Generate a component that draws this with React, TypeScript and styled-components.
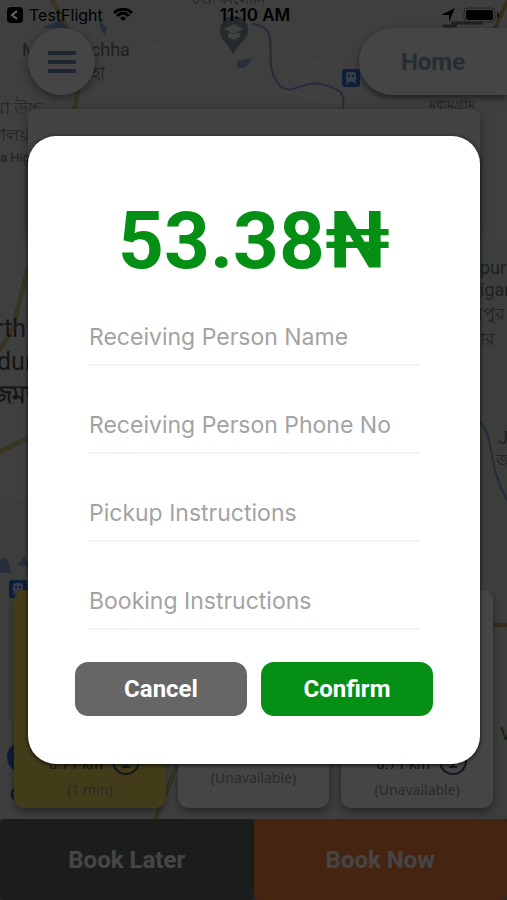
import React from "react";
import styled, { createGlobalStyle } from "styled-components";

const GlobalStyle = createGlobalStyle`
  *, *::before, *::after { box-sizing: border-box; }
  body { margin: 0; font-family: Roboto, "Noto Sans", sans-serif; background: #e3e5e3; }
  button, input { font: inherit; }
`;

const Screen = styled.div`
  position: relative;
  min-height: 100vh;
  display: flex;
  flex-direction: column;
  overflow: hidden;
`;

const MapCanvas = styled.svg`
  position: absolute;
  inset: 0;
  width: 100%;
  height: 100%;
`;

const Page = styled.main`
  position: relative;
  flex: 1;
  display: flex;
  flex-direction: column;
  padding-top: 28px;
`;

const TopBar = styled.header`
  display: flex;
  justify-content: space-between;
  padding-left: 28px;
`;

const MenuButton = styled.button`
  width: 67px;
  height: 67px;
  display: grid;
  place-items: center;
  border: 0;
  border-radius: 50%;
  background: #fff;
  color: #6f91b5;
  box-shadow: 0 3px 8px rgba(0, 0, 0, 0.45);
`;

const HomeButton = styled.button`
  width: 148px;
  height: 67px;
  border: 0;
  border-radius: 34px 0 0 34px;
  background: #fff;
  color: #88a9b9;
  font-size: 24px;
  font-weight: 700;
  box-shadow: 0 3px 6px rgba(0, 0, 0, 0.5);
`;

const SearchPanel = styled.section`
  height: 132px;
  margin: 14px 27px 0 28px;
  border-radius: 8px;
  background: #f6f6f6;
  box-shadow: 0 2px 10px rgba(0, 0, 0, 0.35);
`;

const Vehicles = styled.section`
  display: grid;
  grid-template-columns: repeat(3, 1fr);
  gap: 12px;
  margin-top: auto;
  padding: 0 14px 11px;
`;

const Vehicle = styled.article<{ $selected?: boolean }>`
  height: 218px;
  display: flex;
  flex-direction: column;
  align-items: center;
  justify-content: flex-end;
  gap: 4px;
  padding-bottom: 8px;
  border-radius: 10px;
  background: ${(p) => (p.$selected ? "#f2dc5e" : "#fff")};
  box-shadow: 0 4px 8px rgba(0, 0, 0, 0.4);
`;

const Rate = styled.div`
  display: flex;
  align-items: center;
  gap: 8px;
  padding-left: 10px;
  color: #444;
  font-size: 15px;
`;

const RateValue = styled.span`
  padding-top: 6px;
`;

const Status = styled.div<{ $raised?: boolean }>`
  padding-bottom: ${(p) => (p.$raised ? "12px" : "0")};
  color: #999;
  font: 14px/20px "Noto Sans", sans-serif;
`;

const BookingBar = styled.footer`
  display: grid;
  grid-template-columns: 1fr 1fr;
  background: #8a8f8a;
`;

const BookButton = styled.button<{ $primary?: boolean }>`
  height: 81px;
  border: 0;
  border-radius: 5px;
  background: ${(p) => (p.$primary ? "#ff853f" : "#646b67")};
  color: #fff;
  font-size: 24px;
  font-weight: 700;
`;

const Overlay = styled.div`
  position: absolute;
  inset: 0;
  display: flex;
  align-items: center;
  justify-content: center;
  padding: 0 27px 0 28px;
  background: rgba(0, 0, 0, 0.73);
`;

const Dialog = styled.form`
  flex: 1;
  max-width: 560px;
  padding: 62px 47px 48px;
  border-radius: 28px;
  background: #fff;
  box-shadow: 0 1px 4px rgba(0, 0, 0, 0.8);
`;

const Price = styled.h1`
  margin: 0;
  color: #058f15;
  font-size: 80px;
  line-height: 86px;
  font-weight: 700;
  text-align: center;
`;

const Fields = styled.div`
  display: grid;
  gap: 32px;
  margin: 26px 13px 32px;
`;

const Field = styled.input`
  width: 100%;
  height: 56px;
  padding: 0 1px;
  border: 0;
  border-bottom: 2px solid #f4f4f4;
  outline: 0;
  background: transparent;
  color: #333;
  font-family: Inter, sans-serif;
  font-size: 23px;
  &::placeholder { color: #a3a3a3; opacity: 1; }
`;

const Actions = styled.div`
  display: grid;
  grid-template-columns: 1fr 1fr;
  gap: 14px;
`;

const ActionButton = styled.button<{ $confirm?: boolean }>`
  height: 54px;
  border: 0;
  border-radius: 13px;
  background: ${(p) => (p.$confirm ? "#058f15" : "#666")};
  color: #fff;
  font-size: 24px;
  font-weight: 700;
`;

const StatusBar = styled.div`
  position: absolute;
  inset: 0 0 auto;
  height: 30px;
  display: grid;
  grid-template-columns: 1fr auto 1fr;
  align-items: center;
  padding: 0 8px 0 7px;
  color: #000;
  font-family: Inter, sans-serif;
  font-size: 16px;
`;

const StatusGroup = styled.div<{ $end?: boolean }>`
  display: flex;
  align-items: center;
  justify-content: ${(p) => (p.$end ? "flex-end" : "flex-start")};
  gap: 8px;
`;

const BackToApp = styled.span`
  display: flex;
  align-items: center;
  gap: 6px;
  padding-right: 2px;
`;

const Clock = styled.time`
  padding-left: 4px;
  font-size: 17px;
  font-weight: 600;
`;

const fields = [
  "Receiving Person Name",
  "Receiving Person Phone No",
  "Pickup Instructions",
  "Booking Instructions",
];

const InfoIcon = () => (
  <svg width="30" height="30" viewBox="0 0 30 30" fill="none" stroke="#405a72" strokeWidth="2" aria-hidden="true">
    <circle cx="15" cy="15" r="13" />
    <path d="M12 13h3v8M11 21h8" />
    <path d="M14 8h3" />
  </svg>
);

const TrainBadge = ({ x, y }: { x: number; y: number }) => (
  <g transform={`translate(${x} ${y})`}>
    <rect width="18" height="18" rx="3" fill="#2b70dc" />
    <rect x="4" y="3" width="10" height="10" rx="3" fill="#d3deee" />
    <path d="M6 6h2v2H6zM10 6h2v2h-2z" fill="#2b70dc" />
    <path d="M6 12l-1 3M12 12l1 3" stroke="#d3deee" strokeWidth="2" />
  </g>
);

const CityMap = () => (
  <MapCanvas viewBox="0 0 507 900" preserveAspectRatio="xMidYMid slice" aria-hidden="true">
    <rect width="507" height="900" fill="#e6e7e6" />
    <path d="M470 240H507V900H470zM0 500H40V720H0z" fill="#dce4dd" />
    <g fill="none" strokeLinecap="round">
      <path d="M52 0C70 28 88 70 73 112M0 452L28 438M0 350L13 328 28 268M155 820L176 768M493 625h14M495 28L507 2" stroke="#bda862" strokeWidth="4" />
      <path d="M52 0C70 28 88 70 73 112M0 452L28 438M0 350L13 328 28 268M155 820L176 768" stroke="#e0cf86" strokeWidth="2" />
      <path d="M0 58H30M120 52C160 50 170 38 210 43S290 62 355 68M255 87L340 102" stroke="#fff" strokeWidth="1" />
      <path d="M253 24C282 28 264 56 274 77 288 103 297 80 321 84 336 88 346 90 343 108M480 422C496 440 486 462 507 500" stroke="#8ba0dc" strokeWidth="2" />
    </g>
    <path d="M46 26L60 20 68 28H44zM99 20l8 8-2 8-5-8zM237 61l16-3-8 10h-8zM0 560c4-6 10 0 11 13H0zM17 565l8-10 4 12z" fill="#8fa9dc" />
    <path d="M451 23h32M443 26h14" stroke="#777" strokeWidth="3" />
    <path d="M233 54C227 42 220 40 220 30a14 14 0 0 1 28 0c0 10-8 12-15 24z" fill="#8a9aa2" />
    <path d="M224 29l10-5 9 5-9 5zM228 33v4l6 3 6-3v-4" fill="#edf2f4" />
    <TrainBadge x={342} y={69} />
    <TrainBadge x={9} y={580} />
    <circle cx="23" cy="757" r="16" fill="#3975d8" />
    <circle cx="19" cy="794" r="7" fill="none" stroke="#4a70c9" strokeWidth="3" />
    <g fill="#777" fontFamily='Roboto, "Noto Sans", sans-serif' fontSize="18">
      <text x="22" y="56">Malancachha</text>
      <text x="91" y="79">হা</text>
      <text x="-6" y="114" fill="#888">য়া উচ্চ</text>
      <text x="-9" y="141" fill="#888">বালয়</text>
      <text x="0" y="162" fontSize="13">a High</text>
      <text x="192" y="4" fontSize="14">চণ্ডী কালোনি</text>
      <text x="429" y="109" fontSize="13">মধ্যমগ্রাম</text>
      <text x="480" y="274">pur</text>
      <text x="480" y="296">igar</text>
      <text x="473" y="320">রপুর</text>
      <text x="470" y="345">বার</text>
      <text x="498" y="444">J</text>
      <text x="496" y="466">জ</text>
      <text x="500" y="740" fill="#397c52">V</text>
      <g fill="#555" fontSize="25">
        <text x="-5" y="337">rth</text>
        <text x="-3" y="370">dur</text>
        <text x="-10" y="403" fontWeight="700">জমদ</text>
      </g>
    </g>
  </MapCanvas>
);

export default function App() {
  return (
    <>
      <GlobalStyle />
      <Screen>
        <CityMap />
        <Page>
          <TopBar>
            <MenuButton aria-label="Menu">
              <svg width="28" height="24" viewBox="0 0 28 24" stroke="currentColor" strokeWidth="4">
                <path d="M0 3h28M0 12h28M0 21h28" />
              </svg>
            </MenuButton>
            <HomeButton>Home</HomeButton>
          </TopBar>
          <SearchPanel />
          <Vehicles>
            <Vehicle $selected>
              <Rate><RateValue>0.71 km</RateValue><InfoIcon /></Rate>
              <Status>(1 min)</Status>
            </Vehicle>
            <Vehicle>
              <Status $raised>(Unavailable)</Status>
            </Vehicle>
            <Vehicle>
              <Rate><RateValue>0.71 km</RateValue><InfoIcon /></Rate>
              <Status>(Unavailable)</Status>
            </Vehicle>
          </Vehicles>
          <BookingBar>
            <BookButton>Book Later</BookButton>
            <BookButton $primary>Book Now</BookButton>
          </BookingBar>
        </Page>
        <Overlay>
          <Dialog role="dialog" aria-modal="true" aria-labelledby="price" onSubmit={(e) => e.preventDefault()}>
            <Price id="price">53.38₦</Price>
            <Fields>
              {fields.map((label) => (
                <Field key={label} aria-label={label} placeholder={label} />
              ))}
            </Fields>
            <Actions>
              <ActionButton type="button">Cancel</ActionButton>
              <ActionButton type="submit" $confirm>Confirm</ActionButton>
            </Actions>
          </Dialog>
        </Overlay>
        <StatusBar>
          <StatusGroup>
            <BackToApp>
              <svg width="16" height="16" viewBox="0 0 16 16" aria-hidden="true">
                <rect width="16" height="16" rx="4" fill="#000" />
                <path d="M10 4L5 8l5 4" fill="none" stroke="#666" strokeWidth="2" />
              </svg>
              TestFlight
            </BackToApp>
            <svg width="20" height="14" viewBox="0 0 20 14" fill="none" stroke="#000" strokeWidth="3" aria-hidden="true">
              <path d="M1 5C6 0 14 0 19 5M4 8c4-4 8-4 12 0" />
              <path d="M7 10l3 3 3-3c-2-2-4-2-6 0z" fill="#000" stroke="none" />
            </svg>
          </StatusGroup>
          <Clock>11:10 AM</Clock>
          <StatusGroup $end>
            <svg width="14" height="14" viewBox="0 0 14 14" aria-hidden="true">
              <path d="M14 0L8 14V7H0z" fill="#000" />
            </svg>
            <svg width="36" height="16" viewBox="0 0 36 16" aria-hidden="true">
              <rect x="1" y="1" width="31" height="14" rx="4" fill="none" stroke="#222" />
              <rect x="3" y="3" width="27" height="10" rx="2" fill="#000" />
              <path d="M34 5c3 1 3 5 0 6z" fill="#111" />
            </svg>
          </StatusGroup>
        </StatusBar>
      </Screen>
    </>
  );
}
